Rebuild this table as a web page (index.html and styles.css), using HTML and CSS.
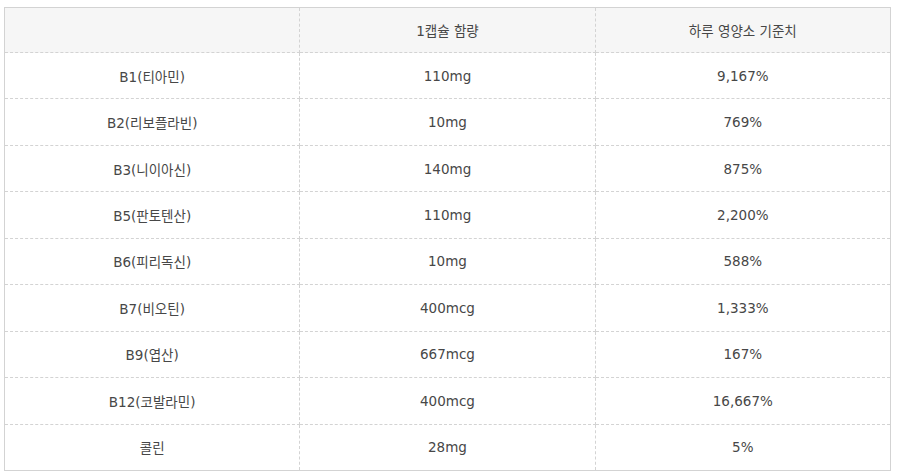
FILE: index.html
```html
<!DOCTYPE html>
<html lang="ko">
<head>
<meta charset="utf-8">
<link rel="stylesheet" href="styles.css">
</head>
<body>
<div class="wrap">
<table class="nutri">
<thead>
<tr><th></th><th>1캡슐 함량</th><th>하루 영양소 기준치</th></tr>
</thead>
<tbody>
<tr><td>B1(티아민)</td><td>110mg</td><td>9,167%</td></tr>
<tr><td>B2(리보플라빈)</td><td>10mg</td><td>769%</td></tr>
<tr><td>B3(니이아신)</td><td>140mg</td><td>875%</td></tr>
<tr><td>B5(판토텐산)</td><td>110mg</td><td>2,200%</td></tr>
<tr><td>B6(피리독신)</td><td>10mg</td><td>588%</td></tr>
<tr><td>B7(비오틴)</td><td>400mcg</td><td>1,333%</td></tr>
<tr><td>B9(엽산)</td><td>667mcg</td><td>167%</td></tr>
<tr><td>B12(코발라민)</td><td>400mcg</td><td>16,667%</td></tr>
<tr><td>콜린</td><td>28mg</td><td>5%</td></tr>
</tbody>
</table>
</div>
</body>
</html>
```
FILE: styles.css
```css
html, body {
  margin: 0;
  padding: 0;
  background: #fff;
}
.wrap {
  padding: 7px 0 0 4px;
}
.nutri {
  width: 887px;
  border-collapse: collapse;
  table-layout: fixed;
  border: 1px solid #d3d3d3;
  font-family: "DejaVu Sans", "Noto Sans CJK KR", sans-serif;
  font-size: 13.5px;
  color: #474747;
}
.nutri th,
.nutri td {
  border: 1px dashed #d3d3d3;
  text-align: center;
  vertical-align: middle;
  padding: 0;
  font-weight: normal;
}
.nutri thead th {
  background: #f6f6f6;
  height: 44px;
}
.nutri tbody td {
  height: 45.44px;
}
```
